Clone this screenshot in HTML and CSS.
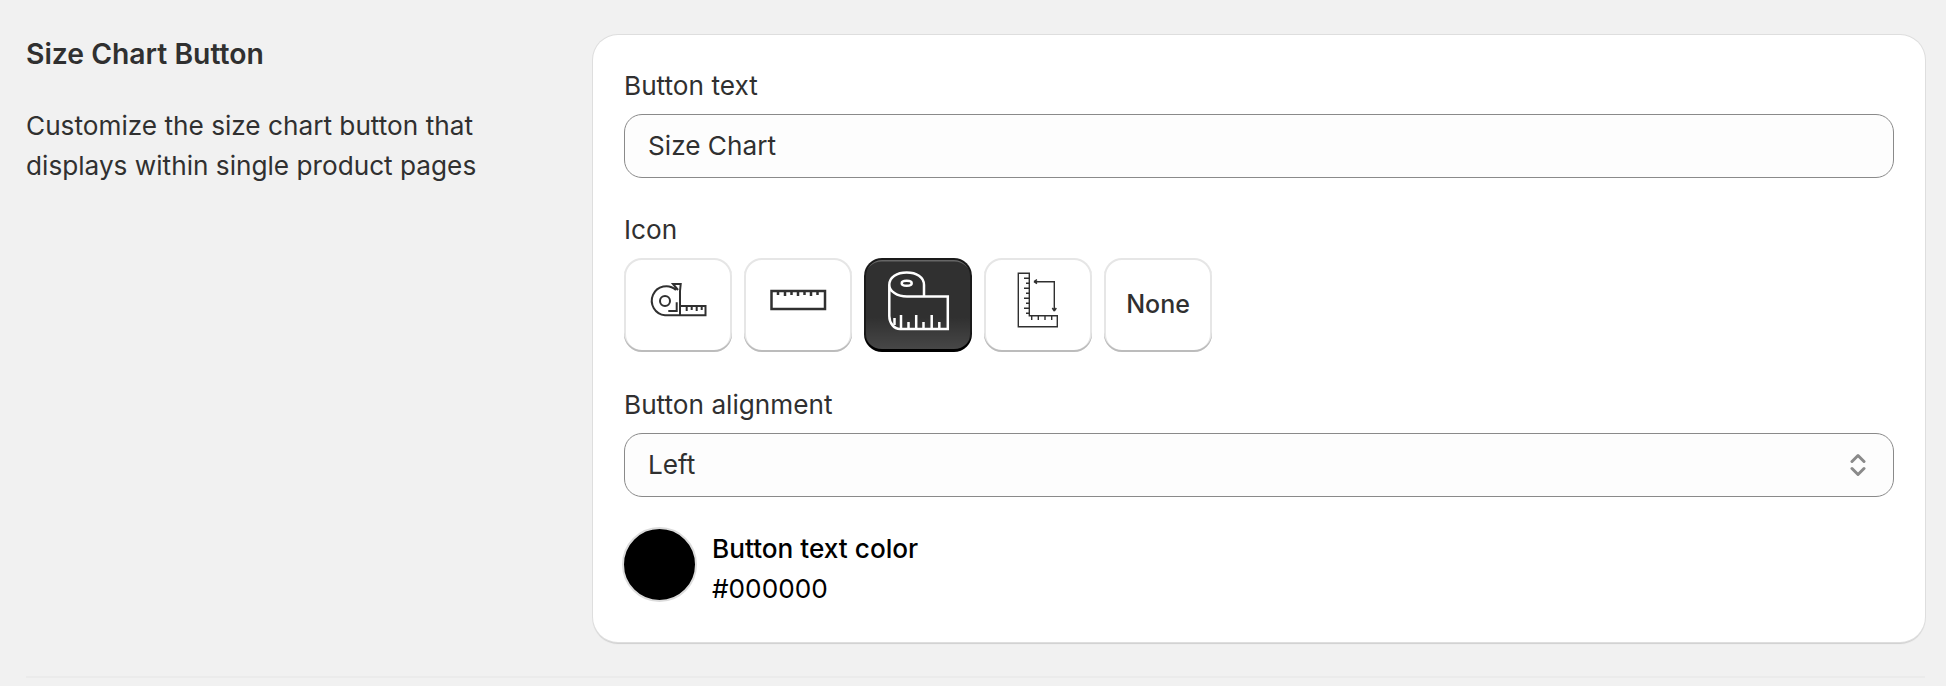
FILE: index.html
```html
<!DOCTYPE html>
<html lang="en">
<head>
<meta charset="utf-8">
<title>Size Chart Button</title>
<link rel="stylesheet" href="styles.css">
</head>
<body>
<main class="page">
  <section class="section">
    <div class="intro">
      <h2 class="intro-title">Size Chart Button</h2>
      <p class="intro-text">Customize the size chart button that displays within single product pages</p>
    </div>
    <div class="card">
      <div class="field">
        <label class="label">Button text</label>
        <div class="control">Size Chart</div>
      </div>
      <div class="field">
        <label class="label">Icon</label>
        <div class="icons">
          <button class="icon-btn">
            <svg class="icon icon-mid" viewBox="0 0 108 94"><path d="M52 32A14.500 14.500 0 1 0 41 57.200H81.500V48H56M56 57.200V33L56.700 26H49L54 32M44.300 53H52.700V44.300"/><circle cx="41" cy="43" r="5"/><path d="M62.700 48V53M67.700 48V52M72.700 48V53M77.700 48V52"/></svg>
          </button>
          <button class="icon-btn">
            <svg class="icon" viewBox="0 0 108 94"><rect x="27.500" y="33" width="53.500" height="18"/><path d="M34 33V37M41 33V38M47.500 33V37M54 33V38M60.500 33V37M67 33V38M73.500 33V37"/></svg>
          </button>
          <button class="icon-btn is-active">
            <svg class="icon" viewBox="0 0 108 94"><path d="M25.300 58V27C25.300 19 33 14.500 42.700 14.500S60 19 60 27V38.500H43C33 38.500 25.300 33 25.300 27M60 38.500H83.800V71H36C30 71 25.300 65 25.300 58"/><ellipse cx="42.700" cy="25.300" rx="5" ry="2.500"/><path d="M30.500 60V67M37 57V70M44.500 64V70M52.200 57V70M59.500 64V70M67.700 57V70M75.300 64V70"/></svg>
          </button>
          <button class="icon-btn">
            <svg class="icon icon-thin" viewBox="0 0 108 94"><path d="M34.300 15.300H45.300V57.700H73.300V68.700H34.300ZM40 20.300H45.300M42 25.300H45.300M40 30.300H45.300M42 35.300H45.300M40 40.300H45.300M42 45.300H45.300M40 50.300H45.300M42 55.300H45.300M47.700 57.700V62M54.300 57.700V62M61 57.700V62M67.700 57.700V62"/><path d="M50 23.700H70.300V53M50 23.700L53 21.700M50 23.700L53 25.700M70.300 53L68.300 50M70.300 53L72.300 50"/></svg>
          </button>
          <button class="icon-btn icon-btn-text">None</button>
        </div>
      </div>
      <div class="field">
        <label class="label">Button alignment</label>
        <div class="control control-select">
          <span>Left</span>
          <svg class="chevrons" viewBox="0 0 16 24"><path d="M2 8.500 8 2.500 14 8.500M2 15.500 8 21.500 14 15.500"/></svg>
        </div>
      </div>
      <div class="color">
        <span class="swatch"></span>
        <div class="color-text">
          <div class="color-name">Button text color</div>
          <div class="color-value">#000000</div>
        </div>
      </div>
    </div>
  </section>
  <hr class="divider">
</main>
</body>
</html>
```
FILE: styles.css
```css
* { box-sizing: border-box; }
html, body { margin: 0; height: 100%; }
body {
  background: #f1f1f1;
  color: #303030;
  font-family: Inter, "Liberation Sans", sans-serif;
  font-size: 26.200px;
  line-height: 40px;
  overflow: hidden;
}
.page { padding: 34px 21px 0 26px; }
.section { display: flex; align-items: flex-start; }
.intro { width: 567px; flex: none; }
.intro-title { margin: 0; font-size: 28.300px; line-height: 40px; font-weight: 600; }
.intro-text { margin: 32px 0 0; width: 490px; }
.card {
  flex: 1;
  height: 607px;
  margin-top: 1px;
  padding: 31px 31px 0;
  background: #fff;
  border-radius: 25px;
  box-shadow: 0 0 0 1px #dedede, 0 2px 1px 0 #cfcfcf;
}
.field { margin-bottom: 32px; }
.field:nth-child(2) { margin-bottom: 33px; }
.field:nth-child(3) { margin-bottom: 22px; }
.label { display: block; height: 48px; line-height: 40px; }
.control {
  height: 64px;
  padding: 0 23px;
  display: flex;
  align-items: center;
  justify-content: space-between;
  background: #fdfdfd;
  border: 1px solid #8a8a8a;
  border-radius: 18px;
}
.chevrons { width: 16px; height: 24px; margin-right: 4px; }
.chevrons path { fill: none; stroke: #8a8a8a; stroke-width: 3; stroke-linecap: round; stroke-linejoin: round; }
.icons { display: flex; gap: 12px; }
.icon-btn {
  width: 108px;
  height: 94px;
  padding: 0;
  display: block;
  border: 0;
  border-radius: 18px;
  background: #fff;
  color: #303030;
  font: 500 25px/38px Inter, "Liberation Sans", sans-serif;
  box-shadow: inset 0 -2px 0 #bcbcbc, inset 0 0 0 2px #e6e6e6;
}
.icon-btn-text { padding-bottom: 2px; }
.icon { display: block; width: 108px; height: 94px; fill: none; stroke: #303030; stroke-width: 2.500; }
.icon-mid { stroke-width: 2; }
.icon-thin { stroke-width: 1.400; }
.is-active {
  background: linear-gradient(180deg, rgba(48,48,48,0) 63%, rgba(255,255,255,.12)), #303030;
  box-shadow: inset 0 -3px 0 #000, inset 0 0 0 2px #1a1a1a, inset 0 3.500px 0 #666;
}
.is-active .icon { stroke: #fff; }
.color { display: flex; align-items: center; gap: 15px; margin-left: -2px; }
.swatch { width: 75px; height: 75px; border-radius: 50%; background: #000; border: 2px solid #dcdcdc; flex: none; }
.color-text { color: #000; padding-top: 10px; }
.color-name { font-weight: 550; }
.divider { margin: 34px 0 0; border: 0; height: 2px; background: #ebebeb; }
```
